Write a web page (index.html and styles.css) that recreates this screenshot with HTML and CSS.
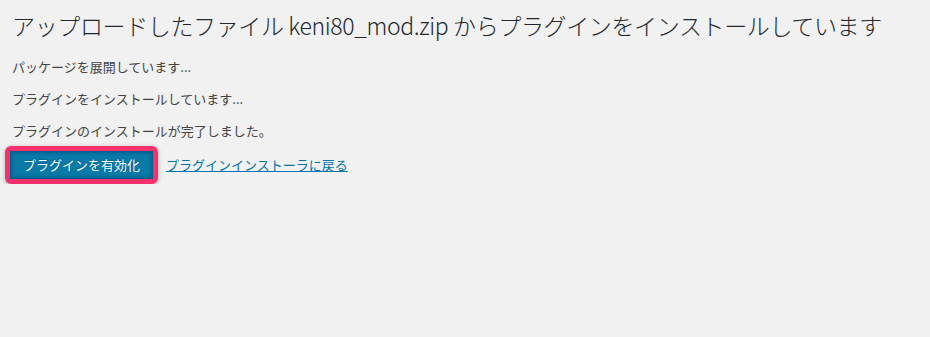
FILE: index.html
```html
<!DOCTYPE html>
<html lang="ja">
<head>
<meta charset="utf-8">
<title>プラグインのインストール</title>
<link rel="stylesheet" href="styles.css">
</head>
<body>
<div class="wrap">
  <h1 class="title">アップロードしたファイル keni80_mod.zip からプラグインをインストールしています</h1>
  <p class="msg">パッケージを展開しています...</p>
  <p class="msg">プラグインをインストールしています...</p>
  <p class="msg">プラグインのインストールが完了しました。</p>
  <div class="actions">
    <span class="highlight"><a class="button-primary" href="#">プラグインを有効化</a></span>
    <a class="back-link" href="#">プラグインインストーラに戻る</a>
  </div>
</div>
</body>
</html>
```

FILE: styles.css
```css
html, body {
  margin: 0;
  padding: 0;
  background: #f1f1f1;
  color: #444;
  font-family: "Noto Sans CJK JP", "Noto Sans", sans-serif;
  font-size: 13px;
  line-height: 1.5;
}

.wrap {
  padding: 0 12px;
}

.title {
  margin: 0;
  padding: 10px 0 4px;
  font-size: 23px;
  font-weight: 300;
  line-height: 30px;
  color: #23282d;
  letter-spacing: -0.37px;
  white-space: nowrap;
}

.msg {
  margin: 13px 0 0;
  line-height: 19px;
}

.actions {
  display: flex;
  align-items: center;
  gap: 8px;
  margin-top: 6px;
  margin-left: -7px;
}

.highlight {
  display: inline-flex;
  border: 5px solid #f4306d;
  border-radius: 6px;
  box-shadow: 0 1px 4px rgba(0, 0, 0, 0.3);
}

.button-primary {
  display: inline-block;
  padding: 0 12px;
  height: 26px;
  line-height: 25px;
  background: #0a7aa9;
  border: 1px solid #005f8c;
  box-shadow: inset 0 0 4px rgba(0, 50, 90, 0.6);
  color: #fff;
  text-decoration: none;
  text-shadow: 0 -1px 1px #006799, 1px 0 1px #006799;
  font-size: 13px;
}

.back-link {
  color: #0073aa;
  text-decoration: underline;
  font-size: 13px;
}
```
